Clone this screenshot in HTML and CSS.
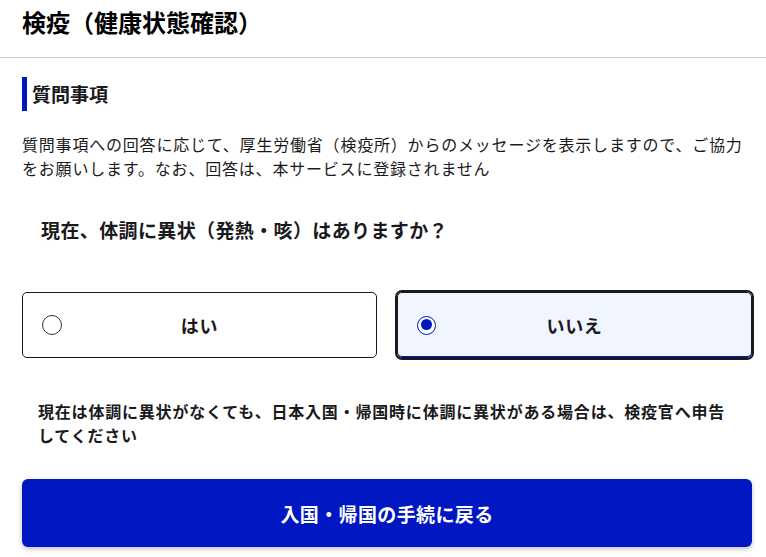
FILE: index.html
```html
<!DOCTYPE html>
<html lang="ja">
<head>
<meta charset="UTF-8">
<title>検疫（健康状態確認）</title>
<link rel="stylesheet" href="styles.css">
</head>
<body>
<header class="page-head">
	<h1 class="page-title">検疫（健康状態確認）</h1>
</header>
<main class="content">
	<h2 class="sec-title">質問事項</h2>
	<p class="lead">質問事項への回答に応じて、厚生労働省（検疫所）からのメッセージを表示しますので、ご協力をお願いします。なお、回答は、本サービスに登録されません</p>

	<p class="question">現在、体調に異状（発熱・咳）はありますか？</p>

	<div class="choices">
		<label class="choice">
			<input type="radio" name="fever" value="yes" class="radio">
			<span class="choice-text">はい</span>
		</label>
		<label class="choice is-checked">
			<input type="radio" name="fever" value="no" class="radio" checked>
			<span class="choice-text">いいえ</span>
		</label>
	</div>

	<p class="note">現在は体調に異状がなくても、日本入国・帰国時に体調に異状がある場合は、検疫官へ申告してください</p>

	<button type="button" class="back-btn">入国・帰国の手続に戻る</button>
</main>
</body>
</html>
```

FILE: styles.css
```css
*{
	box-sizing: border-box;
}

body{
	margin: 0;
	font-family: "Noto Sans CJK JP", "Noto Sans", sans-serif;
	color: #1a1a1c;
	background: #fff;
}

.page-head{
	height: 58px;
	padding: 4px 22px 0;
	border-bottom: 1px solid #cccccc;
}
.page-title{
	margin: 0;
	font-size: 24px;
	line-height: 36px;
	font-weight: 700;
	color: #000;
}

.content{
	padding: 0 14px 20px 22px;
}

.sec-title{
	margin: 19px 0 0;
	height: 34px;
	padding-left: 5px;
	border-left: 5px solid #0017c1;
	font-size: 19px;
	line-height: 34px;
	font-weight: 700;
}

.lead{
	margin: 21px 0 0;
	font-size: 16px;
	line-height: 24px;
	letter-spacing: 0.05em;
}

.question{
	margin: 36px 0 0;
	padding-left: 19px;
	font-size: 19px;
	line-height: 28px;
	font-weight: 700;
	letter-spacing: 0.02em;
}

.choices{
	margin-top: 48px;
	display: grid;
	grid-template-columns: 1fr 1fr;
	gap: 20px;
}
.choice{
	height: 66px;
	padding: 0 19px;
	display: grid;
	grid-template-columns: 20px 1fr 20px;
	align-items: center;
	border: 1px solid #1a1a1c;
	border-radius: 5px;
	background: #fff;
	cursor: pointer;
}
.choice.is-checked{
	background: #f0f5ff;
	outline: 2px solid #1a1a1c;
	box-shadow: inset 0 -1px 0 #0017c1;
}
.choice-text{
	text-align: center;
	font-size: 18px;
	font-weight: 700;
	letter-spacing: 0.04em;
}

.radio{
	appearance: none;
	-webkit-appearance: none;
	margin: 0;
	width: 20px;
	height: 20px;
	border: 1px solid #333;
	border-radius: 50%;
	background: #fff;
	position: relative;
}
.radio:checked{
	width: 19px;
	height: 19px;
	border: 1.5px solid #0017c1;
}
.radio:checked::after{
	content: "";
	position: absolute;
	top: 2.5px;
	left: 2.5px;
	width: 11px;
	height: 11px;
	border-radius: 50%;
	background: #0017c1;
}

.note{
	margin: 41px 0 0;
	padding: 0 16px 0 16px;
	font-size: 16px;
	line-height: 24px;
	font-weight: 700;
	letter-spacing: 0.05em;
}

.back-btn{
	display: block;
	width: 100%;
	height: 68px;
	margin-top: 32px;
	border: none;
	border-radius: 6px;
	background: #0017c1;
	color: #fff;
	font-family: inherit;
	font-size: 19px;
	font-weight: 700;
	letter-spacing: 0.02em;
	box-shadow: 0 2px 5px rgba(0,0,0,0.25);
	cursor: pointer;
}
```
